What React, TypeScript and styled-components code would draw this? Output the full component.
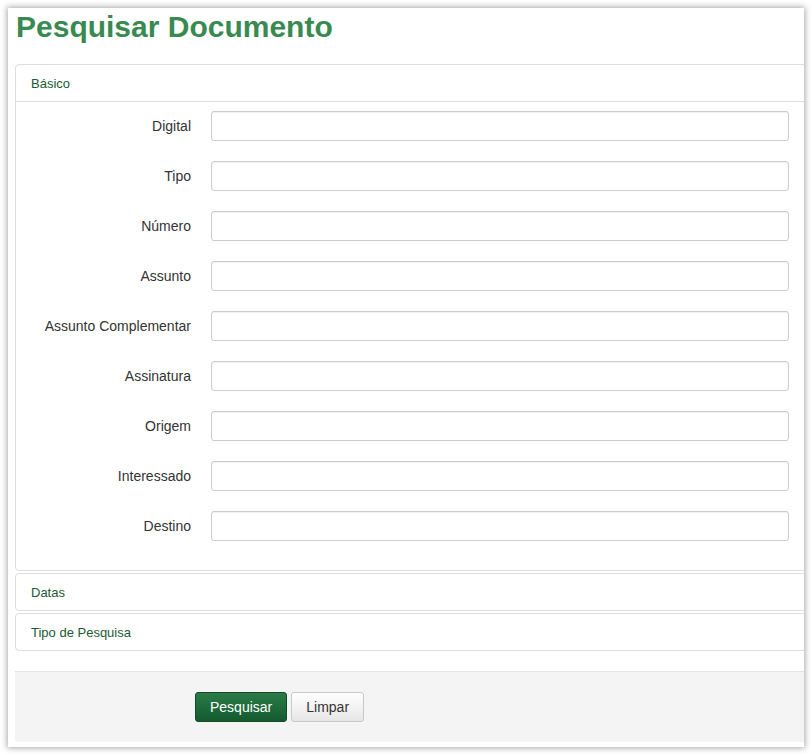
import React from 'react'
import styled, {createGlobalStyle} from 'styled-components'

const fields = [
  'Digital',
  'Tipo',
  'Número',
  'Assunto',
  'Assunto Complementar',
  'Assinatura',
  'Origem',
  'Interessado',
  'Destino'
]

export default function App() {
  return (
    <>
      <GlobalStyle />
      <Window>
        <Title>Pesquisar Documento</Title>
        <Panels>
          <Panel>
            <PanelHeader>Básico</PanelHeader>
            <PanelBody>
              {fields.map((label) => (
                <Row key={label}>
                  <Label>{label}</Label>
                  <Input type="text" />
                </Row>
              ))}
            </PanelBody>
          </Panel>
          <Panel>
            <PanelHeader>Datas</PanelHeader>
          </Panel>
          <Panel>
            <PanelHeader>Tipo de Pesquisa</PanelHeader>
          </Panel>
        </Panels>
        <Footer>
          <Button primary>Pesquisar</Button>
          <Button>Limpar</Button>
        </Footer>
      </Window>
    </>
  )
}

const GlobalStyle = createGlobalStyle`
  body {
    margin: 0;
    background: #ffffff;
    font-family: "Liberation Sans", Arial, sans-serif;
  }
`

const Window = styled.div`
  margin: 8px;
  width: 796px;
  height: 739px;
  background: #fff;
  box-shadow: 0 0 6px 1px rgba(0, 0, 0, 0.35);
  overflow: hidden;
  display: flex;
  flex-direction: column;
`

const Title = styled.h1`
  margin: 2px 0 0 8px;
  font-size: 30px;
  font-weight: bold;
  line-height: 34px;
  color: #388a51;
  height: 54px;
`

const Panels = styled.div`
  display: flex;
  flex-direction: column;
  gap: 2px;
  padding-left: 7px;
  margin-right: -6px;
`

const Panel = styled.div`
  border: 1px solid #dddddd;
  border-radius: 4px;
  background: #fff;
`

const PanelHeader = styled.div`
  height: 36px;
  display: flex;
  align-items: center;
  padding-left: 15px;
  font-size: 13px;
  color: #1a5a33;
`

const PanelBody = styled.div`
  border-top: 1px solid #dddddd;
  padding: 9px 0 29px;
  display: flex;
  flex-direction: column;
  gap: 20px;
`

const Row = styled.div`
  display: flex;
  align-items: center;
`

const Label = styled.label`
  width: 175px;
  text-align: right;
  padding-right: 20px;
  font-size: 14px;
  color: #333;
`

const Input = styled.input`
  box-sizing: border-box;
  width: 578px;
  height: 30px;
  border: 1px solid #cccccc;
  border-radius: 3px;
  background: #fff;
  box-shadow: inset 0 1px 1px rgba(0, 0, 0, 0.06);
`

const Footer = styled.div`
  margin: 20px 0 0 7px;
  height: 70px;
  background: #f4f4f4;
  border-top: 1px solid #e3e3e3;
  display: flex;
  align-items: center;
  gap: 4px;
  padding-left: 180px;
`

const Button = styled.button<{primary?: boolean}>`
  height: 30px;
  padding: 0 14px;
  font-family: "Liberation Sans", Arial, sans-serif;
  font-size: 14px;
  border-radius: 3px;
  border: 1px solid ${({primary}) => (primary ? '#124a26' : '#c8c8c8')};
  color: ${({primary}) => (primary ? '#fff' : '#333')};
  background: ${({primary}) =>
    primary
      ? 'linear-gradient(#2a7b47, #145a2e)'
      : 'linear-gradient(#ffffff, #e6e6e6)'};
  cursor: pointer;
`
